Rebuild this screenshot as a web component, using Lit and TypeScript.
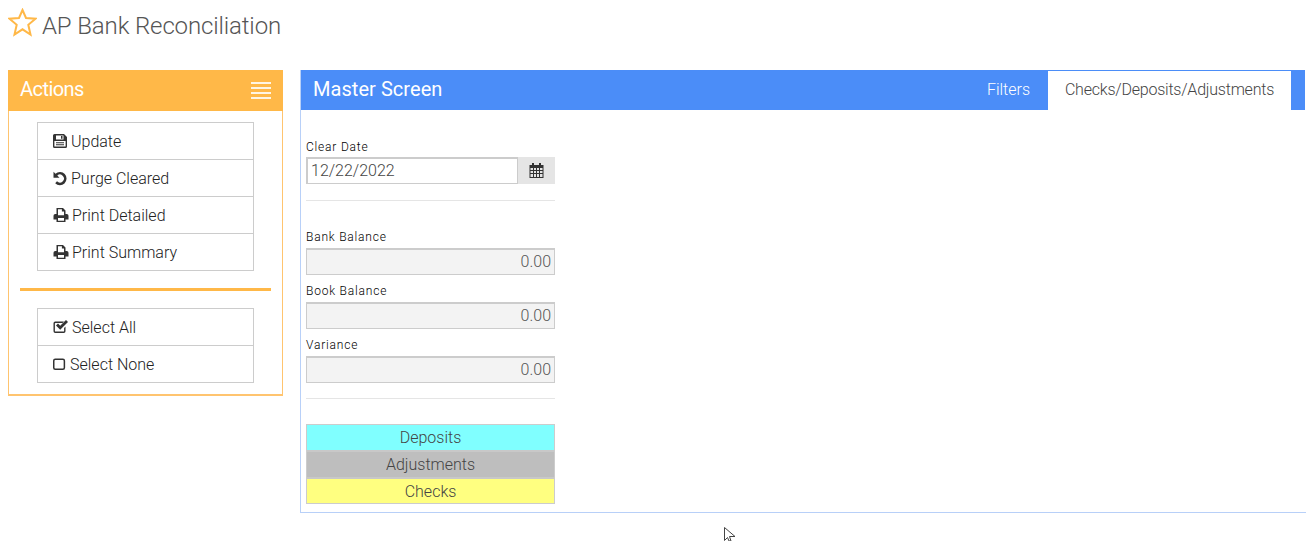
import { LitElement, html, css, svg } from "lit";
import { customElement } from "lit/decorators.js";

const icons = {
  save: svg`<path fill-rule="evenodd" d="M1.500 0H11l3 3v9.500a1.500 1.500 0 0 1-1.500 1.500h-11A1.500 1.500 0 0 1 0 12.500v-11A1.500 1.500 0 0 1 1.500 0ZM3 1.400v4h7.500v-4ZM8 2h1.500v2.800H8ZM1.400 7v5.600h11.200V7ZM3 8.200h8v1H3Zm0 2h8v1H3Z"/>`,
  undo: svg`<path d="M0 .5v6h6L3.800 4.300A4 4 0 1 1 3.500 10.100l-1.800 1.900A6.600 6.600 0 1 0 2 2.500Z" transform="translate(.5 .2)"/>`,
  print: svg`<path fill-rule="evenodd" d="M3 0h6.500L12 2.500V6h1.200A1.800 1.800 0 0 1 15 7.800v3.700h-3V14H3v-2.500H0V7.800A1.800 1.800 0 0 1 1.800 6H3Zm1.500 1.300V7.200h6V3.600H8.400V1.300ZM4.500 10v2.700h6V10Z"/>`,
  check: svg`<path d="M2 1.500h8.500L9 3H2a.6.6 0 0 0-.6.6V11a.6.6 0 0 0 .6.6h8a.6.6 0 0 0 .6-.6V8L12 6.600V11.300A1.700 1.700 0 0 1 10.300 13H1.700A1.700 1.700 0 0 1 0 11.300V3.200A1.700 1.700 0 0 1 1.700 1.500Z"/><path d="M2.500 5.500 4.500 3.500 6.700 5.700 12.500 0 14.500 2 6.700 9.800Z"/>`,
  box: svg`<path fill-rule="evenodd" d="M2.400 1h8.200A2.400 2.400 0 0 1 13 3.400v7.700a2.400 2.400 0 0 1-2.400 2.400H2.400A2.400 2.400 0 0 1 0 11.100V3.400A2.400 2.400 0 0 1 2.400 1Zm0 1.600a.8.8 0 0 0-.8.8v7.700c0 .44.36.8.8.8h8.200a.8.8 0 0 0 .8-.8V3.400a.8.8 0 0 0-.8-.8Z"/>`,
};

@customElement("app-root")
export class AppRoot extends LitElement {
  static styles = css`
    :host { display: block; width: 1306px; height: 541px; overflow: hidden; position: relative; background: #fff;
      font-family: Roboto, "Liberation Sans", sans-serif; font-weight: 300; color: #333; }
    .title { height: 70px; box-sizing: border-box; display: flex; align-items: flex-start; padding: 8px 0 0 8px; gap: 5px; }
    .title svg { width: 29px; height: 29px; display: block; }
    .title h1 { margin: 0; padding-top: 3px; font-size: 24px; line-height: 30px; font-weight: 300; color: #555; letter-spacing: -0.13px; }
    .main { display: flex; align-items: flex-start; padding-left: 8px; gap: 17px; width: 1400px; }
    .left { width: 275px; box-sizing: border-box; border: 1px solid #ffc46f; border-bottom-width: 2px; }
    .left-head { margin: -1px -1px 0; height: 41px; background: #ffb848; color: #fff; display: flex; align-items: center; justify-content: space-between; padding: 0 12px 0 12px; font-size: 20px; font-weight: 400; }
    .left-head span { letter-spacing: -0.55px; padding-bottom: 4px; }
    .burger { display: flex; flex-direction: column; gap: 3px; width: 20px; }
    .burger i { display: block; height: 2px; background: #fff; opacity: .85; }
    .left-body { padding: 11px 11px 11px; }
    .list { margin-left: 17px; width: 217px; box-sizing: border-box; border: 1px solid #ccc; }
    .row { height: 37px; box-sizing: border-box; display: flex; align-items: center; gap: 3px; padding-left: 15px; font-size: 16px; color: #222; border-top: 1px solid #ccc; }
    .row:first-child { border-top: 0; height: 36px; }
    .row svg { width: 15px; height: 15px; fill: #333; flex: none; display: block; }
    .row svg.wide { width: 16px; }
    .row svg.thin { width: 14px; }
    .sep { height: 3px; background: #ffb848; margin: 17px 0 17px; }
    .right { width: 1100px; height: 443px; box-sizing: border-box; border: 1px solid #b8d0f8; border-top: 0; }
    .right-head { height: 40px; background: #4b8df8; color: #fff; display: flex; align-items: flex-end; padding-left: 12px; box-sizing: border-box; width: 1004px; border-top: 1px solid #4b8df8; }
    .right-head .h { font-size: 20px; font-weight: 400; line-height: 37px; align-self: flex-start; letter-spacing: 0.05px; flex: 1; }
    .tab { font-size: 16px; height: 39px; line-height: 37px; box-sizing: border-box; }
    .tab.f { color: #fff; padding-right: 18px; }
    .tab.a { color: #444; background: #fff; width: 243px; text-align: center; margin-right: 14px; letter-spacing: -0.22px; }
    .body { width: 249px; padding: 28px 0 0 5px; }
    label { display: block; font-size: 12px; font-weight: 300; line-height: 18px; margin-bottom: 2px; color: #000; letter-spacing: 0.8px; }
    label.first { margin-bottom: 1px; }
    .date { display: flex; height: 27px; }
    .date .v { flex: 1; box-sizing: border-box; border: 1px solid #ccc; border-top-width: 2px; border-left-width: 2px; padding-left: 3px; font-size: 16px; line-height: 24px; color: #444; }
    .date .b { width: 37px; background: #e5e5e5; display: flex; align-items: center; justify-content: center; }
    .date svg { width: 15px; height: 15px; fill: #333; }
    hr { border: 0; height: 1px; background: #e5e5e5; margin: 0; }
    .h1 { margin-top: 16px; margin-bottom: 27px; }
    .ro { height: 27px; box-sizing: border-box; background: #f3f3f3; border: 1px solid #ccc; border-top-width: 2px; text-align: right; padding-right: 3px; font-size: 16px; line-height: 24px; color: #555; margin-bottom: 7px; }
    .h2 { margin-top: 15px; margin-bottom: 25px; }
    .ro.last { margin-bottom: 0; }
    .legend { border: 1px solid #ccc; box-sizing: border-box; height: 80px; display: grid; grid-template-rows: 25px 2px 25px 2px 24px; text-align: center; font-size: 16px; color: #444; }
    .legend .c { line-height: 25px; }
    .legend .g { background: #c8c8c8; }
    .dep { background: #80ffff; }
    .adj { background: #bebebe; }
    .chk { background: #ffff80; }
    .cursor { position: absolute; left: 724px; top: 527px; width: 12px; height: 14px; }
  `;

  private row(icon: keyof typeof icons, text: string, cls = "") {
    return html`<div class="row"><svg class=${cls} viewBox="0 0 15 15">${icons[icon]}</svg><span>${text}</span></div>`;
  }

  render() {
    return html`
      <div class="title">
        <svg viewBox="0 0 29 29"><path fill="none" stroke="#ffb848" stroke-width="2" stroke-linejoin="miter" d="M14.500 2 18 10 27.500 10.700 20.300 16.800 22.500 26.500 14.500 21.300 6.500 26.500 8.700 16.800 1.500 10.700 11 10Z"/></svg>
        <h1>AP Bank Reconciliation</h1>
      </div>
      <div class="main">
        <div class="left">
          <div class="left-head"><span>Actions</span><div class="burger"><i></i><i></i><i></i><i></i></div></div>
          <div class="left-body">
            <div class="list">
              ${this.row("save", "Update")}
              ${this.row("undo", "Purge Cleared")}
              ${this.row("print", "Print Detailed", "wide")}
              ${this.row("print", "Print Summary", "wide")}
            </div>
            <div class="sep"></div>
            <div class="list">
              ${this.row("check", "Select All", "wide")}
              ${this.row("box", "Select None", "thin")}
            </div>
          </div>
        </div>
        <div class="right">
          <div class="right-head">
            <span class="h">Master Screen</span>
            <span class="tab f">Filters</span>
            <span class="tab a">Checks/Deposits/Adjustments</span>
          </div>
          <div class="body">
            <label class="first">Clear Date</label>
            <div class="date">
              <div class="v">12/22/2022</div>
              <div class="b"><svg viewBox="0 0 15 15"><path fill-rule="evenodd" d="M3 0h2v2h5V0h2v2h2.500v13H.5V2H3ZM1.500 5v2h2.500V5Zm3.500 0v2h2V5Zm3 0v2h2V5Zm3 0v2h2.500V5ZM1.500 8v2h2.500V8Zm3.500 0v2h2V8Zm3 0v2h2V8Zm3 0v2h2.500V8ZM1.500 11v3h2.500v-3Zm3.500 0v3h2v-3Zm3 0v3h2v-3Zm3 0v3h2.500v-3Z"/></svg></div>
            </div>
            <hr class="h1" />
            <label>Bank Balance</label>
            <div class="ro">0.00</div>
            <label>Book Balance</label>
            <div class="ro">0.00</div>
            <label>Variance</label>
            <div class="ro last">0.00</div>
            <hr class="h2" />
            <div class="legend">
              <div class="c dep">Deposits</div><div class="g"></div>
              <div class="c adj">Adjustments</div><div class="g"></div>
              <div class="c chk">Checks</div>
            </div>
          </div>
        </div>
      </div>
      <svg class="cursor" viewBox="0 0 12 14"><path fill="#fff" stroke="#444" stroke-width="1" d="M.5.500v13l3-3 1.500 3.500h2L5.500 9.500H11Z"/></svg>
    `;
  }
}
